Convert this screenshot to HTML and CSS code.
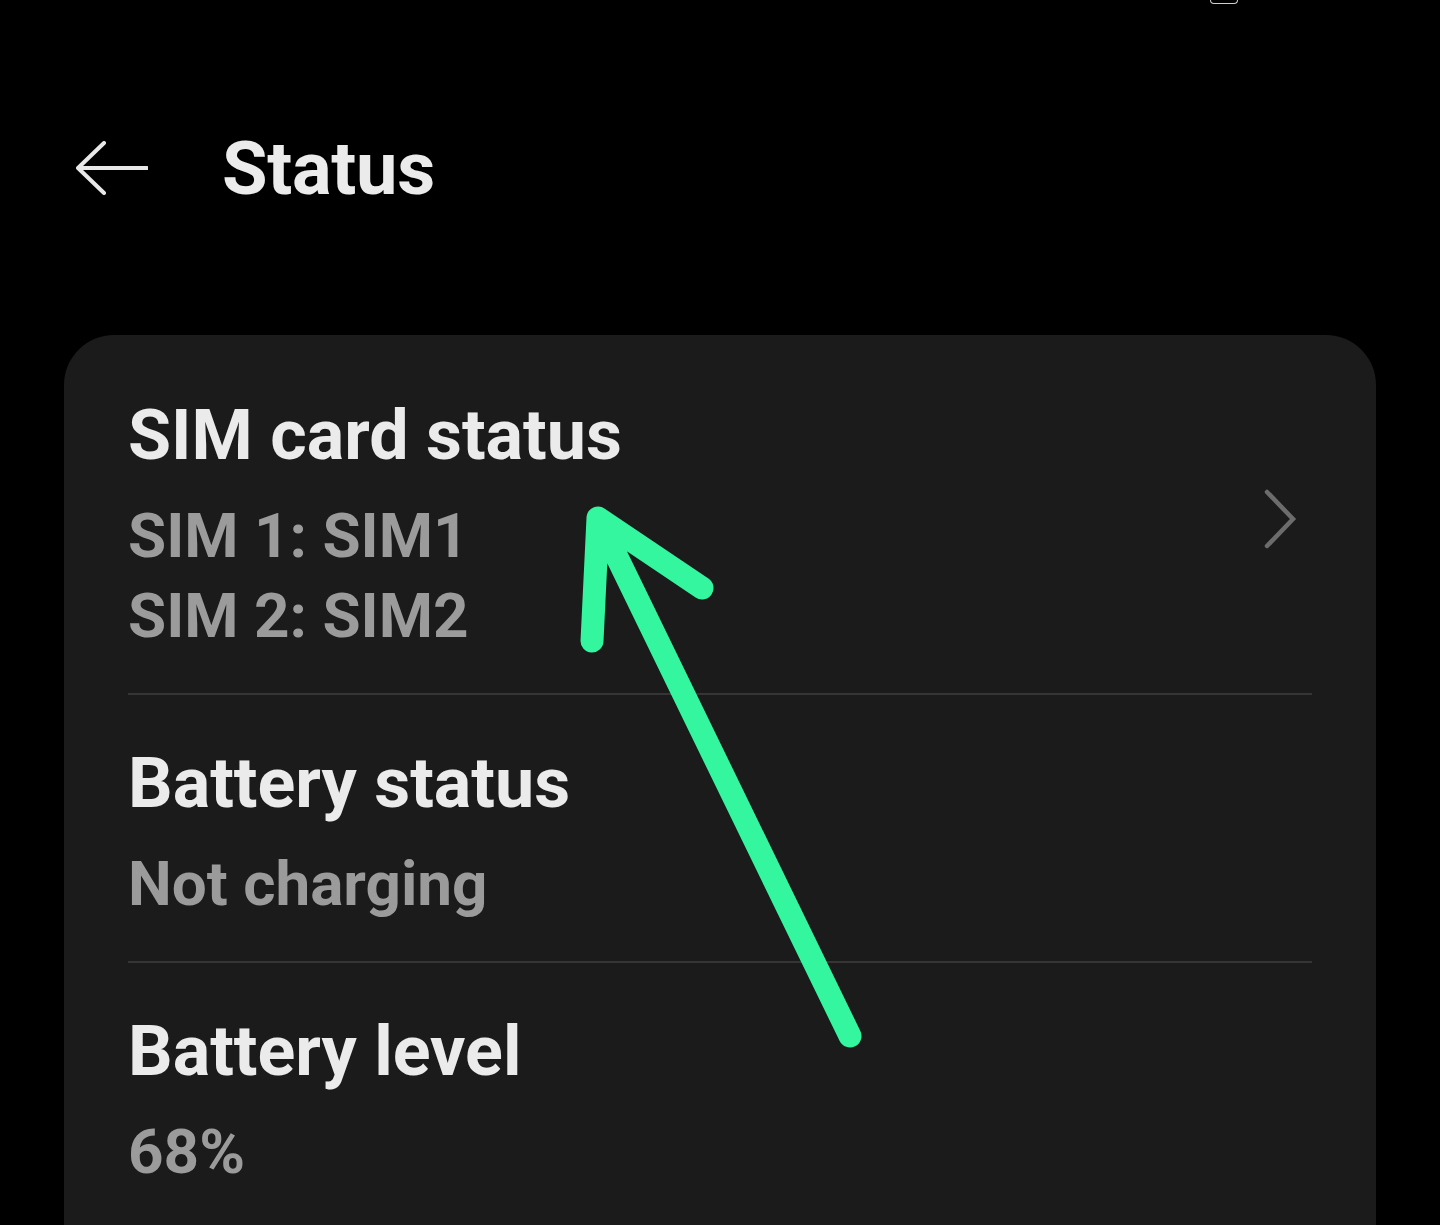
FILE: index.html
```html
<!DOCTYPE html>
<html lang="en">
<head>
<meta charset="utf-8">
<title>Status</title>
<link rel="stylesheet" href="styles.css">
</head>
<body>
<div class="screen">
  <div class="statusbar"><span class="sb-icon"></span></div>
  <header class="appbar">
    <svg class="back" width="72" height="54" viewBox="0 0 72 54" aria-hidden="true">
      <path d="M2 27 H71 M28 2 L2 27 L28 52" fill="none" stroke="#e8e8e8" stroke-width="4" stroke-linecap="round" stroke-linejoin="round"/>
    </svg>
    <h1 class="title">Status</h1>
  </header>

  <section class="card">
    <div class="row row-first">
      <div class="row-text">
        <div class="row-title">SIM card status</div>
        <div class="row-sub">SIM 1: SIM1<br>SIM 2: SIM2</div>
      </div>
      <svg class="chev" width="50" height="60" viewBox="0 0 50 60" aria-hidden="true">
        <path d="M5 3 L31 30 L5 57" fill="none" stroke="#6c6c6c" stroke-width="4.5" stroke-linecap="round" stroke-linejoin="miter"/>
      </svg>
    </div>
    <div class="divider"></div>
    <div class="row">
      <div class="row-text">
        <div class="row-title">Battery status</div>
        <div class="row-sub">Not charging</div>
      </div>
    </div>
    <div class="divider"></div>
    <div class="row">
      <div class="row-text">
        <div class="row-title">Battery level</div>
        <div class="row-sub">68%</div>
      </div>
    </div>
  </section>

  <svg class="annotation" width="1440" height="1225" viewBox="0 0 1440 1225" aria-hidden="true">
    <path d="M598 518 L850 1036 M592 641 L598 518 L702 588" fill="none" stroke="#34f69e" stroke-width="23" stroke-linecap="round" stroke-linejoin="round"/>
  </svg>
</div>
</body>
</html>
```
FILE: styles.css
```css
html, body {
  margin: 0;
  padding: 0;
  background: #000;
}
body {
  font-family: Roboto, "Noto Sans", "Liberation Sans", sans-serif;
  color: #ebebeb;
  overflow: hidden;
}
.screen {
  position: relative;
  width: 1440px;
  height: 1225px;
  overflow: hidden;
  background: #000;
}
.statusbar {
  height: 6px;
  display: flex;
  justify-content: flex-end;
  padding-right: 202px;
}
.sb-icon {
  width: 26px;
  height: 3px;
  border-bottom-left-radius: 4px;
  border-bottom-right-radius: 4px;
  border: 1.5px solid #cfcfcf;
  border-top: none;
}
.appbar {
  display: flex;
  align-items: flex-start;
  padding: 118px 0 121px 76px;
  height: 90px;
}
.back {
  margin-top: 17px;
  flex: none;
}
.title {
  margin: 0 0 0 74px;
  font-size: 74px;
  line-height: 90px;
  font-weight: 700;
  color: #ebebeb;
  letter-spacing: -0.3px;
}
.card {
  margin: 0 64px;
  background: #1b1b1b;
  border-radius: 50px 50px 0 0;
  padding: 10px 64px 200px;
}
.row {
  display: flex;
  align-items: center;
  padding: 46px 0 37px;
}
.row-first {
  padding-top: 48px;
}
.row-text {
  flex: 1;
}
.row-title {
  font-size: 70px;
  line-height: 84px;
  font-weight: 700;
  color: #ebebeb;
  margin-bottom: 19px;
}
.row-sub {
  font-size: 62px;
  line-height: 80px;
  font-weight: 700;
  color: #9b9b9b;
}
.chev {
  flex: none;
  margin-bottom: 12px;
}
.divider {
  height: 2px;
  background: #353535;
}
.annotation {
  position: absolute;
  left: 0;
  top: 0;
  pointer-events: none;
}
```
